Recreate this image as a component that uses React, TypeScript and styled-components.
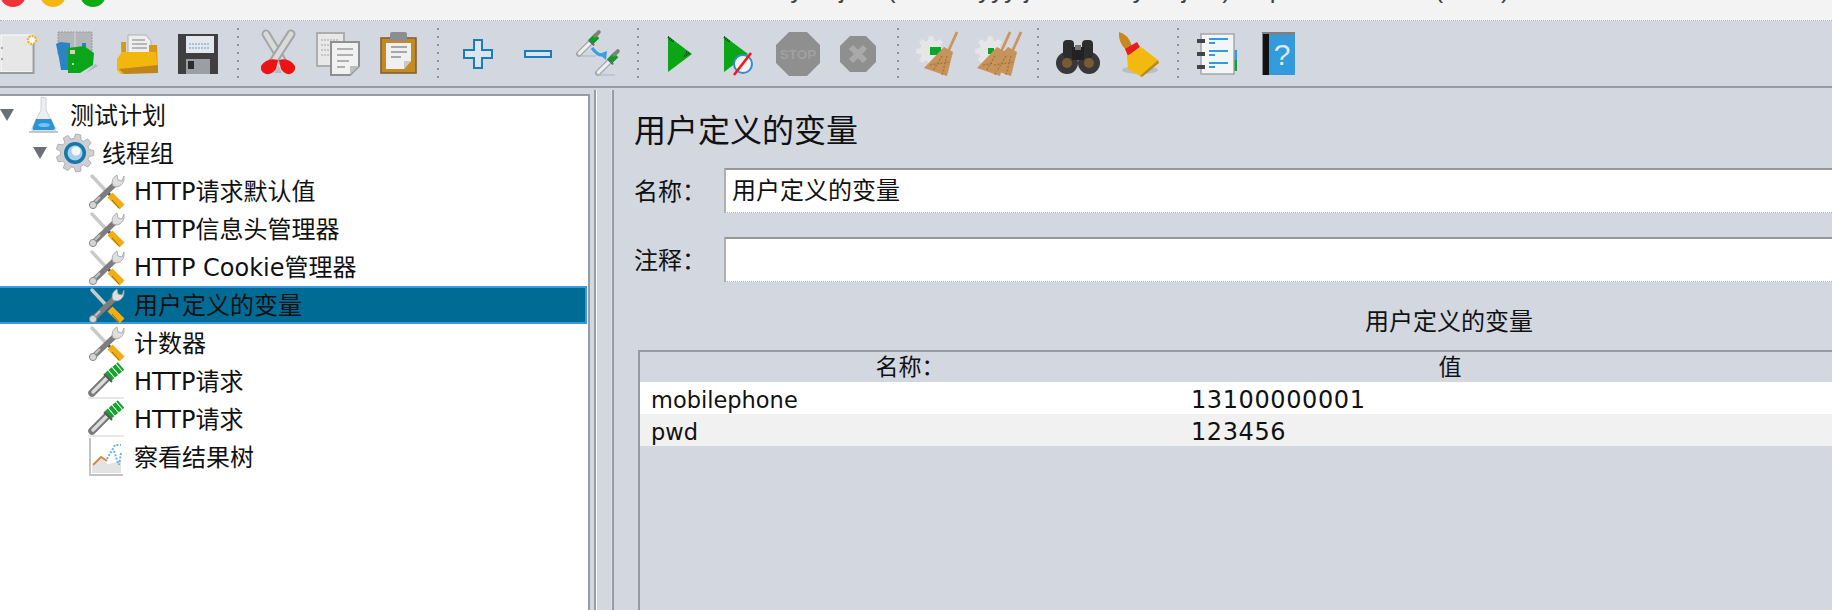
import React from "react";
import styled, { createGlobalStyle } from "styled-components";

const FONT = `"DejaVu Sans", "Noto Sans CJK SC", sans-serif`;
const LINE = "#969ba6";
const BG = "#d3d7e0";

const Global = createGlobalStyle`
  html, body { margin: 0; padding: 0; background: ${BG}; overflow: hidden; }
  #root { width: 1832px; height: 610px; overflow: hidden; }
`;

const Page = styled.div`
  width: 1832px;
  height: 610px;
  overflow: hidden;
  display: flex;
  flex-direction: column;
  background: ${BG};
  font-family: ${FONT};
  color: #111;
`;

const TitleBar = styled.div`
  flex: none;
  height: 20px;
  display: grid;
  overflow: hidden;
  background: #f3f3f3;
  border-bottom: 1px dotted #aeb2ba;
`;
const Lights = styled.div`
  grid-area: 1 / 1;
  display: flex;
  gap: 14px;
  margin-top: -19px;
`;
const Light = styled.span<{ $c: string }>`
  width: 26px;
  height: 26px;
  border-radius: 50%;
  background: ${(p) => p.$c};
`;
const WindowTitle = styled.div`
  grid-area: 1 / 1;
  margin-top: -28px;
  padding-left: 439px;
  height: 34px;
  line-height: 34px;
  text-align: center;
  white-space: nowrap;
  font-family: "Liberation Sans", sans-serif;
  font-size: 26px;
  color: #444;
`;

const Toolbar = styled.div`
  flex: none;
  height: 65px;
  display: flex;
  align-items: center;
  margin-left: -12px;
  border-bottom: 2px solid ${LINE};
`;
const Slot = styled.div`
  flex: none;
  width: 60px;
  display: flex;
  justify-content: center;
  svg { display: block; overflow: visible; }
`;
const Sep = styled.div`
  flex: none;
  width: 20px;
  height: 50px;
  margin-top: -1px;
  display: flex;
  justify-content: center;
  &::before {
    content: "";
    width: 2px;
    height: 100%;
    background: repeating-linear-gradient(to bottom, #8e929c 0 2px, transparent 2px 8px);
  }
`;

const Main = styled.div`
  flex: 1;
  min-height: 0;
  display: flex;
`;
const TreePane = styled.div`
  flex: none;
  width: 588px;
  margin-top: 6px;
  background: #fff;
  border-top: 2px solid ${LINE};
  border-right: 2px solid ${LINE};
`;
const Row = styled.div<{ $indent: number; $sel?: boolean }>`
  box-sizing: border-box;
  height: 38px;
  display: flex;
  align-items: center;
  padding-left: ${(p) => p.$indent}px;
  font-size: 24px;
  white-space: nowrap;
  background: ${(p) => (p.$sel ? "#006c96" : "transparent")};
  border: ${(p) => (p.$sel ? "2px solid #3a9bdc" : "2px solid transparent")};
  border-left-width: 0;
  margin-right: 1px;
`;
const NodeText = styled.span`
  padding-bottom: 4px;
`;
const Twist = styled.span<{ $gap: number }>`
  flex: none;
  width: 0;
  height: 0;
  border-left: 7px solid transparent;
  border-right: 7px solid transparent;
  border-top: 12px solid #6c6f75;
  margin-right: ${(p) => p.$gap}px;
`;
const NodeIcon = styled.span<{ $w: number; $gap: number }>`
  flex: none;
  width: ${(p) => p.$w}px;
  height: 36px;
  margin-right: ${(p) => p.$gap}px;
  svg { display: block; overflow: visible; }
`;

const Splitter = styled.div`
  flex: none;
  box-sizing: border-box;
  width: 18px;
  margin: 2px 0 0 4px;
  border-left: 2px solid ${LINE};
  border-right: 1px dotted #eef0f3;
  box-shadow: inset 1px 0 0 #fff;
`;
const Panel = styled.div`
  flex: none;
  width: 1700px;
  margin: 2px 0 0 0;
  box-sizing: border-box;
  border-left: 2px solid ${LINE};
  padding: 18px 0 0 20px;
`;
const Heading = styled.div`
  height: 60px;
  line-height: 46px;
  font-size: 32px;
  white-space: nowrap;
`;
const FieldRow = styled.div`
  display: flex;
  align-items: center;
  margin-bottom: 24px;
`;
const Label = styled.div`
  flex: none;
  width: 90px;
  font-size: 24px;
  padding-bottom: 2px;
`;
const Field = styled.div`
  box-sizing: border-box;
  flex: 1;
  height: 45px;
  line-height: 42px;
  padding-left: 6px;
  font-size: 24px;
  background: #fff;
  border-top: 2px solid #979797;
  border-left: 2px solid #b0b0b0;
  border-bottom: 1px dotted #a9abb0;
`;
const Caption = styled.div`
  box-sizing: border-box;
  width: 1618px;
  margin: 21px 0 0 4px;
  padding-left: 4px;
  height: 44px;
  text-align: center;
  font-size: 24px;
  line-height: 33px;
`;
const Table = styled.div`
  box-sizing: border-box;
  width: 1618px;
  margin-left: 4px;
  height: 265px;
  border-top: 2px solid ${LINE};
  border-left: 2px solid ${LINE};
`;
const Cols = styled.div<{ $alt?: boolean; $head?: boolean }>`
  display: grid;
  grid-template-columns: 540px 540px 1fr;
  height: ${(p) => (p.$head ? 30 : 32)}px;
  line-height: ${(p) => (p.$head ? 30 : 36)}px;
  background: ${(p) => (p.$head ? "transparent" : p.$alt ? "#f1f1f1" : "#fff")};
  font-size: 24px;
`;
const HeadCell = styled.div`
  text-align: center;
  font-size: 23px;
`;
const NameCell = styled.div`
  padding-left: 11px;
  font-size: 22.5px;
`;
const ValueCell = styled.div`
  padding-left: 11px;
  letter-spacing: 0.6px;
`;

/* ---------- drawings ---------- */

const gear = (cx: number, cy: number, ro: number, ri: number, n: number) => {
  const pts: string[] = [];
  for (let i = 0; i < n; i++) {
    const step = (Math.PI * 2) / n;
    const a = i * step;
    [
      [-0.32, ri],
      [-0.18, ro],
      [0.18, ro],
      [0.32, ri],
    ].forEach(([o, r]) => {
      const t = a + o * step * 1.1;
      pts.push(`${(cx + r * Math.cos(t)).toFixed(1)},${(cy + r * Math.sin(t)).toFixed(1)}`);
    });
  }
  return pts.join(" ");
};

const Tb = ({ children }: { children: React.ReactNode }) => (
  <Slot>
    <svg width="44" height="44" viewBox="0 0 44 44">
      {children}
    </svg>
  </Slot>
);

const Broom = ({ dx = 0 }: { dx?: number }) => (
  <g transform={`translate(${dx} 0)`}>
    <path d="M40 0 L31 20" stroke="#c9965f" strokeWidth="2.8" />
    <polygon points="27,15 36,20 30,44 7,36" fill="#c6935a" />
    <path d="M25 24 L16 39 M30 24 L25 43 M13 33 L32 30" stroke="#a0743a" strokeWidth="1.2" strokeDasharray="2 1.5" />
  </g>
);

const Pipette = ({ x, y, s = 1 }: { x: number; y: number; s?: number }) => (
  <g transform={`translate(${x} ${y}) scale(${s})`}>
    <path d="M2 22 L15 9" stroke="#a5a5a5" strokeWidth="6" strokeLinecap="round" />
    <path d="M2.5 21.5 L15 9" stroke="#eceff2" strokeWidth="3.4" strokeLinecap="round" />
    <path d="M14 10 L21 3" stroke="#0a9e22" strokeWidth="7" />
    <path d="M19 3 L23 -1" stroke="#7d827a" strokeWidth="4" strokeLinecap="round" />
    <path d="M13 8 L18 13" stroke="#666" strokeWidth="2" />
  </g>
);

const tools: React.ReactNode[] = [
  <Tb key="new">
    <rect x="5" y="3" width="32" height="37" fill="#e7e7e8" stroke="#fff" strokeWidth="1" />
    <path d="M37.5 12 V41 H4" fill="none" stroke="#9b9b9b" strokeWidth="2" />
    <circle cx="6" cy="16" r="1.2" fill="#aaa" />
    <circle cx="6" cy="27" r="1.2" fill="#aaa" />
    <circle cx="36" cy="8" r="4" fill="#fff" stroke="#f0b030" strokeWidth="2.4" strokeDasharray="2 1" />
  </Tb>,
  <Tb key="tpl">
    <rect x="2" y="0" width="34" height="22" fill="#b4b6ba" stroke="#9a9a9a" strokeDasharray="2 1" />
    <path d="M19 0 V22" stroke="#d8d8d8" />
    <polygon points="0,12 4,10 14,11 14,38 5,38 3,26" fill="#2a84c4" />
    <rect x="26" y="11" width="4" height="9" fill="#2a84c4" />
    <polygon points="12,16 28,14 38,21 37,33 24,41 12,41" fill="#0aa518" />
    <path d="M39 32 L42 34 L30 41 Z" fill="#b4b7bd" />
    <rect x="14" y="18" width="5" height="4" fill="#d8cfc0" />
    <circle cx="17" cy="32" r="1" fill="#fff" />
  </Tb>,
  <Tb key="open">
    <polygon points="12,3 30,3 35,9 35,22 12,22" fill="#eeeeee" stroke="#b0b0b0" />
    <path d="M16 8 H29 M16 12 H31 M16 16 H31" stroke="#a5a5a5" strokeWidth="1.4" />
    <polygon points="5,10 10,10 10,22 33,22 33,13 41,13 42,38 6,38" fill="#d49a15" />
    <polygon points="1,27 6,20 40,20 42,40 5,42 1,38" fill="#f2b60c" />
    <polygon points="3,37 42,33 42,41 8,42" fill="#c0851a" />
  </Tb>,
  <Tb key="save">
    <polygon points="2,2 42,2 42,42 2,42" fill="#3f3f42" />
    <rect x="10" y="4" width="28" height="17" fill="#e4e7ec" />
    <path d="M13 12 H34 M13 16 H34" stroke="#5a9fd6" strokeWidth="1.2" strokeDasharray="2 1" />
    <rect x="10" y="27" width="24" height="15" fill="#9b9ea3" />
    <rect x="12" y="29" width="6" height="8" fill="#2c2c2e" />
  </Tb>,
  <Tb key="cut">
    <path d="M10 2 L27 30" stroke="#a5a5a5" strokeWidth="9" strokeLinecap="round" />
    <path d="M10 2 L27 30" stroke="#dadada" strokeWidth="5" strokeLinecap="round" />
    <path d="M35 2 L17 30" stroke="#a5a5a5" strokeWidth="9" strokeLinecap="round" />
    <path d="M35 2 L17 30" stroke="#dadada" strokeWidth="5" strokeLinecap="round" />
    <path d="M5 34 Q11 25 22 28 L20 37 Q16 43 10 42 Q4 40 5 34 Z" fill="#ee1313" />
    <path d="M39 34 Q33 25 23 28 L25 37 Q29 43 34 42 Q40 40 39 34 Z" fill="#ee1313" />
    <path d="M18 41 L22 33 L26 41 Z" fill="#b8bbc0" />
  </Tb>,
  <Tb key="copy">
    <rect x="1" y="1" width="27" height="33" fill="#e8e8e9" stroke="#adadad" strokeWidth="2" />
    <path d="M5 8 H22 M5 13 H16 M5 18 H14 M5 23 H14" stroke="#c6c6c6" strokeWidth="2" strokeDasharray="2 1" />
    <polygon points="15,10 43,10 43,34 34,43 15,43" fill="#f1f1f2" stroke="#8f8f8f" strokeWidth="2" />
    <polygon points="34,43 34,34 43,34" fill="#bdbdbd" />
    <path d="M21 17 H37 M21 23 H37 M21 29 H33 M21 35 H29" stroke="#b0b0b0" strokeWidth="2" />
  </Tb>,
  <Tb key="paste">
    <rect x="5" y="6" width="35" height="35" fill="#c68a22" stroke="#7e6238" strokeWidth="1.6" />
    <polygon points="10,11 35,11 35,29 28,37 10,37" fill="#f0f0f1" />
    <polygon points="28,37 28,29 35,29" fill="#c9c9c9" />
    <rect x="14" y="0" width="17" height="9" rx="2" fill="#8b8d92" />
    <path d="M15 15 H31 M15 20 H31 M15 25 H25" stroke="#8f8f8f" strokeWidth="1.6" />
  </Tb>,
  <Tb key="plus">
    <polygon points="18,8 26,8 26,18 36,18 36,26 26,26 26,36 18,36 18,26 8,26 8,18 18,18" fill="#d9e5f1" stroke="#1a7cb8" strokeWidth="2" />
  </Tb>,
  <Tb key="minus">
    <rect x="9" y="19" width="26" height="6" fill="#d9e5f1" stroke="#1a7cb8" strokeWidth="2" />
  </Tb>,
  <Tb key="toggle">
    <Pipette x={1} y={1} s={0.95} />
    <Pipette x={20} y={20} s={0.95} />
    <path d="M3 24 H20 M21 43 H39" stroke="#b2b4b8" strokeWidth="1.2" />
    <path d="M16 16 Q22 24 27 23" fill="none" stroke="#35a0e8" strokeWidth="3" />
    <polygon points="31,19 30,28 23,22" fill="#35a0e8" />
  </Tb>,
  <Tb key="start">
    <polygon points="12,4 36,22 12,40" fill="#0aa616" />
    <path d="M12 5 L18 10 M30 20 L34 22 M28 24 L32 22" stroke="#133" strokeWidth="2" strokeDasharray="1 1" />
  </Tb>,
  <Tb key="nopause">
    <polygon points="8,4 32,22 8,40" fill="#0aa616" />
    <path d="M8 5 L14 10" stroke="#133" strokeWidth="2" strokeDasharray="1 1" />
    <circle cx="27" cy="32" r="9" fill="#f3f3f3" stroke="#2f8fd6" strokeWidth="2" />
    <path d="M18 43 L35 21" stroke="#ee1a1a" strokeWidth="2.6" />
  </Tb>,
  <Tb key="stop">
    <polygon points="13,0 31,0 44,13 44,31 31,44 13,44 0,31 0,13" fill="#8f8f8f" />
    <text x="22" y="27" textAnchor="middle" fontFamily="Liberation Sans, sans-serif" fontWeight="700" fontSize="13.5" fill="#a0a0a0">STOP</text>
  </Tb>,
  <Tb key="shutdown">
    <polygon points="14,4 30,4 40,14 40,30 30,40 14,40 4,30 4,14" fill="#8f8f8f" />
    <path d="M15 15 L29 29 M29 15 L15 29" stroke="#a9a9a9" strokeWidth="6" />
  </Tb>,
  <Tb key="clear">
    <polygon points={gear(15, 19, 15, 11, 8)} fill="#e6e6e7" />
    <rect x="14" y="15" width="11" height="8" fill="#0aa52a" />
    <Broom dx={1} />
  </Tb>,
  <Tb key="clearall">
    <polygon points={gear(14, 19, 15, 11, 8)} fill="#e6e6e7" />
    <rect x="12" y="16" width="6" height="6" fill="#0aa52a" />
    <Broom dx={-6} />
    <Broom dx={5} />
  </Tb>,
  <Tb key="search">
    <circle cx="11" cy="31" r="11" fill="#38383a" />
    <circle cx="33" cy="31" r="11" fill="#38383a" />
    <circle cx="11" cy="31" r="5" fill="#7a5a30" />
    <circle cx="33" cy="31" r="5" fill="#7a5a30" />
    <rect x="7" y="8" width="11" height="18" rx="4" fill="#2d2d2f" />
    <rect x="26" y="8" width="11" height="18" rx="4" fill="#2d2d2f" />
    <rect x="16" y="15" width="12" height="13" fill="#222" />
    <rect x="19" y="13" width="6" height="5" fill="#777" />
  </Tb>,
  <Tb key="reset">
    <path d="M3 0 Q12 2 16 14 L10 18 Q2 10 3 0 Z" fill="#c9881f" />
    <ellipse cx="24" cy="38" rx="18" ry="4" fill="#a9acb3" opacity="0.6" />
    <polygon points="9,17 21,10 24,15 12,24" fill="#ea1c1c" />
    <polygon points="11,24 25,15 42,28 24,44 12,37" fill="#f3b90e" />
    <path d="M24 44 L42 28 L43 31 L26 45 Z" fill="#bd8a12" />
  </Tb>,
  <Tb key="func">
    <rect x="36" y="18" width="5" height="15" fill="#2f9be0" />
    <rect x="36" y="28" width="5" height="11" fill="#0aa52a" />
    <rect x="5" y="2" width="33" height="40" fill="#f4f5f6" stroke="#9fa2a8" strokeWidth="1.4" />
    <path d="M1 9 H9 M1 22 H9 M1 35 H9" stroke="#444" strokeWidth="4" />
    <path d="M13 7 H32 M13 11 H19 M13 19 H32 M13 23 H19 M13 31 H32 M13 35 H19" stroke="#2f9be0" strokeWidth="2" />
  </Tb>,
  <Tb key="help">
    <rect x="6" y="0" width="33" height="43" fill="#7d8086" />
    <rect x="7" y="2" width="6" height="41" fill="#111" />
    <rect x="13" y="3" width="26" height="40" fill="#319bdc" />
    <text x="26" y="33" textAnchor="middle" fontFamily="Liberation Sans, sans-serif" fontSize="30" fill="#dfe8ef">?</text>
  </Tb>,
];

const layout = [4, 3, 3, 4, 2, 2, 2];

const ToolsIcon = () => (
  <svg width="37" height="37" viewBox="0 0 37 37">
    <path d="M4 3 L19 19" stroke="#c9c9c9" strokeWidth="3.4" strokeLinecap="round" />
    <path d="M19 19 L22 22" stroke="#555" strokeWidth="3" />
    <path d="M22 22 L34 34" stroke="#f1ad12" strokeWidth="7" />
    <path d="M24 27 L31 35" stroke="#8d6a10" strokeWidth="1" />
    <path d="M27 11 L6 31" stroke="#7d7d7e" strokeWidth="5.5" />
    <path d="M12 24 L7 29" stroke="#c2c2c2" strokeWidth="2" />
    <circle cx="5" cy="32" r="3.6" fill="#d5d5d5" stroke="#8a8a8a" />
    <path d="M25 13 Q22 6 29 2 L30 7 L34 8 L36 3 Q37 12 29 14 Z" fill="#dedede" stroke="#a0a0a0" strokeWidth="0.8" />
  </svg>
);
const FlaskIcon = () => (
  <svg width="27" height="36" viewBox="0 0 27 36">
    <path d="M11 0 L16 1 V13 L26 32 Q26 34 24 34 H4 Q1 34 2 31 L11 13 Z" fill="#eceef1" stroke="#cfd2d6" />
    <path d="M6 22 H21 L25 31 Q25 33 23 33 H4 Q2 33 3 30 Z" fill="#2b93d8" />
    <ellipse cx="14" cy="28" rx="6" ry="2" fill="#7bc1ee" />
    <path d="M-1 35 H28" stroke="#aab0b8" strokeWidth="1.4" />
  </svg>
);
const GearIcon = () => (
  <svg width="36" height="36" viewBox="0 0 36 36">
    <polygon points={gear(18, 18, 19, 14.5, 9)} fill="#cfcfd1" stroke="#a5a5a7" strokeWidth="0.8" />
    <circle cx="18" cy="18" r="11" fill="#1678a8" />
    <circle cx="18" cy="18" r="7.5" fill="#a8d0ea" />
    <circle cx="19" cy="16" r="4.5" fill="#f4f6f8" />
  </svg>
);
const PipetteIcon = () => (
  <svg width="37" height="36" viewBox="0 0 37 36">
    <path d="M4 30 L20 14" stroke="#7a7a7a" strokeWidth="7.5" strokeLinecap="round" />
    <path d="M5 29 L19 15" stroke="#dcdcdc" strokeWidth="3.4" strokeLinecap="round" />
    <path d="M20 14 L33 3" stroke="#15a32d" strokeWidth="10" strokeDasharray="4 1" />
    <path d="M24 19 L16 11" stroke="#555" strokeWidth="2" />
    <path d="M0 35 H36" stroke="#cfcfcf" strokeWidth="1.2" />
  </svg>
);
const ResultsIcon = () => (
  <svg width="37" height="36" viewBox="0 0 37 36">
    <path d="M2 -1 V36 H35" fill="none" stroke="#c4c4c4" strokeWidth="2" />
    <polygon points="4,34 4,27 13,19 20,25 33,22 33,34" fill="#e3e3e3" />
    <path d="M5 26 L13 18 L19 22" fill="none" stroke="#d08a4a" strokeWidth="2" />
    <path d="M19 20 L27 6 H33 M26 12 L30 24 M33 14 L31 26" fill="none" stroke="#6db4e6" strokeWidth="2" strokeDasharray="2 1.5" />
  </svg>
);

type Node = { text: string; indent: number; kind: "flask" | "gear" | "tools" | "pipette" | "results"; sel?: boolean };
const nodes: Node[] = [
  { text: "测试计划", indent: 0, kind: "flask" },
  { text: "线程组", indent: 33, kind: "gear" },
  { text: "HTTP请求默认值", indent: 88, kind: "tools" },
  { text: "HTTP信息头管理器", indent: 88, kind: "tools" },
  { text: "HTTP Cookie管理器", indent: 88, kind: "tools" },
  { text: "用户定义的变量", indent: 88, kind: "tools", sel: true },
  { text: "计数器", indent: 88, kind: "tools" },
  { text: "HTTP请求", indent: 88, kind: "pipette" },
  { text: "HTTP请求", indent: 88, kind: "pipette" },
  { text: "察看结果树", indent: 88, kind: "results" },
];

const renderIcon = (kind: Node["kind"]) => {
  switch (kind) {
    case "flask":
      return (
        <NodeIcon $w={27} $gap={13}>
          <FlaskIcon />
        </NodeIcon>
      );
    case "gear":
      return (
        <NodeIcon $w={36} $gap={9}>
          <GearIcon />
        </NodeIcon>
      );
    case "tools":
      return (
        <NodeIcon $w={37} $gap={9}>
          <ToolsIcon />
        </NodeIcon>
      );
    case "pipette":
      return (
        <NodeIcon $w={37} $gap={9}>
          <PipetteIcon />
        </NodeIcon>
      );
    default:
      return (
        <NodeIcon $w={37} $gap={9}>
          <ResultsIcon />
        </NodeIcon>
      );
  }
};

export default function App() {
  let cursor = 0;
  return (
    <Page>
      <Global />
      <TitleBar>
        <Lights>
          <Light $c="#f0323a" />
          <Light $c="#f5b60f" />
          <Light $c="#0eaa16" />
        </Lights>
        <WindowTitle>day01.jmx (/Users/yyy/jmeter/day01.jmx) - Apache JMeter (5.1.1)</WindowTitle>
      </TitleBar>
      <Toolbar>
        {layout.map((n, i) => {
          const group = tools.slice(cursor, cursor + n);
          cursor += n;
          return (
            <React.Fragment key={i}>
              {group}
              {i < layout.length - 1 && <Sep />}
            </React.Fragment>
          );
        })}
      </Toolbar>
      <Main>
        <TreePane>
          {nodes.map((n, i) => (
            <Row key={i} $indent={n.indent} $sel={n.sel}>
              {n.kind === "flask" && <Twist $gap={16} />}
              {n.kind === "gear" && <Twist $gap={10} />}
              {renderIcon(n.kind)}
              <NodeText>{n.text}</NodeText>
            </Row>
          ))}
        </TreePane>
        <Splitter />
        <Panel>
          <Heading>用户定义的变量</Heading>
          <FieldRow>
            <Label>名称：</Label>
            <Field>用户定义的变量</Field>
          </FieldRow>
          <FieldRow>
            <Label>注释：</Label>
            <Field />
          </FieldRow>
          <Caption>用户定义的变量</Caption>
          <Table>
            <Cols $head>
              <HeadCell>名称：</HeadCell>
              <HeadCell>值</HeadCell>
              <span />
            </Cols>
            <Cols>
              <NameCell>mobilephone</NameCell>
              <ValueCell>13100000001</ValueCell>
              <span />
            </Cols>
            <Cols $alt>
              <NameCell>pwd</NameCell>
              <ValueCell>123456</ValueCell>
              <span />
            </Cols>
          </Table>
        </Panel>
      </Main>
    </Page>
  );
}
